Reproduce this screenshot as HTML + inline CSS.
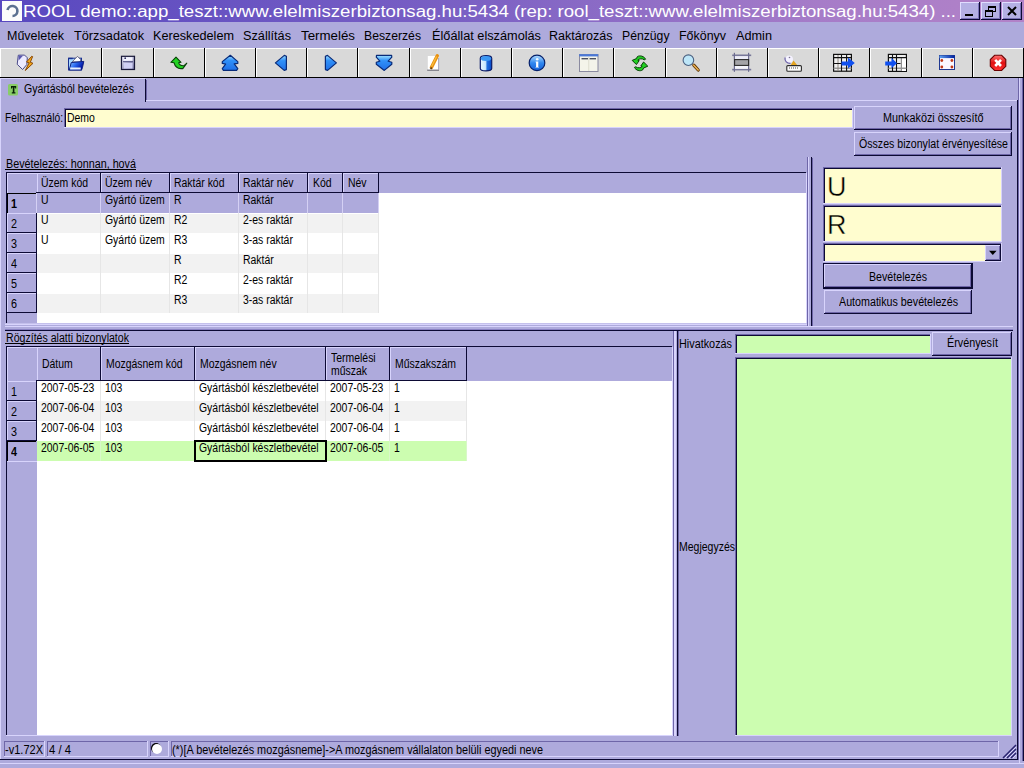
<!DOCTYPE html>
<html><head><meta charset="utf-8"><style>
html,body{margin:0;padding:0;width:1024px;height:768px;overflow:hidden;background:#aeaadc}
body>div,body>svg{position:absolute}
.t{position:absolute;white-space:nowrap;font-family:"Liberation Sans",sans-serif;line-height:1;transform-origin:0 0}
</style></head><body>
<div style="left:0px;top:0px;width:1024px;height:768px;background:#aeaadc;"></div>
<div style="left:0;top:0;width:1024px;height:22px;background:linear-gradient(90deg,#5848c0 0%,#7a60c4 45%,#a67cc8 80%,#b282c8 100%)"></div>
<div style="left:2px;top:1px;width:20px;height:20px;background:#fbfbfb;"></div>
<svg style="position:absolute;left:2px;top:1px" width="20" height="20" viewBox="0 0 20 20"><path d="M5.5 9 A5 5 0 1 1 10.5 15" fill="none" stroke="#5b7090" stroke-width="2.6"/></svg>
<div class="t" style="left:23px;top:4px;font-size:16px;color:#fff;transform:scaleX(1.1640);">ROOL demo::app_teszt::www.elelmiszerbiztonsag.hu:5434 (rep: rool_teszt::www.elelmiszerbiztonsag.hu:5434) ...</div>
<div style="left:960px;top:2px;width:20px;height:18px;background:#b4b0e4;"></div>
<div style="left:960px;top:2px;width:20px;height:1px;background:#e0dcff;"></div>
<div style="left:960px;top:2px;width:1px;height:18px;background:#e0dcff;"></div>
<div style="left:960px;top:19px;width:20px;height:1px;background:#0c0a34;"></div>
<div style="left:979px;top:2px;width:1px;height:18px;background:#0c0a34;"></div>
<div style="left:961px;top:18px;width:18px;height:1px;background:#7a72b8;"></div>
<div style="left:978px;top:3px;width:1px;height:16px;background:#7a72b8;"></div>
<div style="left:981px;top:2px;width:20px;height:18px;background:#b4b0e4;"></div>
<div style="left:981px;top:2px;width:20px;height:1px;background:#e0dcff;"></div>
<div style="left:981px;top:2px;width:1px;height:18px;background:#e0dcff;"></div>
<div style="left:981px;top:19px;width:20px;height:1px;background:#0c0a34;"></div>
<div style="left:1000px;top:2px;width:1px;height:18px;background:#0c0a34;"></div>
<div style="left:982px;top:18px;width:18px;height:1px;background:#7a72b8;"></div>
<div style="left:999px;top:3px;width:1px;height:16px;background:#7a72b8;"></div>
<div style="left:1002px;top:2px;width:20px;height:18px;background:#b4b0e4;"></div>
<div style="left:1002px;top:2px;width:20px;height:1px;background:#e0dcff;"></div>
<div style="left:1002px;top:2px;width:1px;height:18px;background:#e0dcff;"></div>
<div style="left:1002px;top:19px;width:20px;height:1px;background:#0c0a34;"></div>
<div style="left:1021px;top:2px;width:1px;height:18px;background:#0c0a34;"></div>
<div style="left:1003px;top:18px;width:18px;height:1px;background:#7a72b8;"></div>
<div style="left:1020px;top:3px;width:1px;height:16px;background:#7a72b8;"></div>
<div style="left:965px;top:14px;width:8px;height:2px;background:#000;"></div>
<svg style="position:absolute;left:981px;top:2px" width="20" height="18"><rect x="7.5" y="4.5" width="7" height="5" fill="none" stroke="#000"/><rect x="7" y="4" width="8" height="2" fill="#000"/><rect x="4.5" y="8.5" width="7" height="6" fill="#b4b0e4" stroke="#000"/><rect x="4" y="8" width="8" height="2" fill="#000"/></svg>
<svg style="position:absolute;left:1002px;top:2px" width="20" height="18"><path d="M6 5 L14 13 M14 5 L6 13" stroke="#000" stroke-width="2"/></svg>
<div class="t" style="left:7px;top:30px;font-size:12px;color:#000;transform:scaleX(1.0420);">Műveletek</div>
<div class="t" style="left:74px;top:30px;font-size:12px;color:#000;transform:scaleX(1.0601);">Törzsadatok</div>
<div class="t" style="left:153px;top:30px;font-size:12px;color:#000;transform:scaleX(1.0558);">Kereskedelem</div>
<div class="t" style="left:243px;top:30px;font-size:12px;color:#000;transform:scaleX(1.0582);">Szállítás</div>
<div class="t" style="left:301px;top:30px;font-size:12px;color:#000;transform:scaleX(1.1091);">Termelés</div>
<div class="t" style="left:364px;top:30px;font-size:12px;color:#000;transform:scaleX(1.0173);">Beszerzés</div>
<div class="t" style="left:432px;top:30px;font-size:12px;color:#000;transform:scaleX(1.0611);">Élőállat elszámolás</div>
<div class="t" style="left:549px;top:30px;font-size:12px;color:#000;transform:scaleX(1.0461);">Raktározás</div>
<div class="t" style="left:622px;top:30px;font-size:12px;color:#000;transform:scaleX(1.0171);">Pénzügy</div>
<div class="t" style="left:679px;top:30px;font-size:12px;color:#000;transform:scaleX(1.0362);">Főkönyv</div>
<div class="t" style="left:736px;top:30px;font-size:12px;color:#000;transform:scaleX(1.0583);">Admin</div>
<div style="left:0px;top:48px;width:51px;height:30px;background:#d9d9d9;"></div>
<div style="left:0px;top:48px;width:51px;height:1px;background:#ffffff;"></div>
<div style="left:0px;top:48px;width:1px;height:30px;background:#ffffff;"></div>
<div style="left:50px;top:48px;width:1px;height:30px;background:#000000;"></div>
<div style="left:0px;top:77px;width:51px;height:1px;background:#000000;"></div>
<div style="left:51px;top:48px;width:51px;height:30px;background:#d9d9d9;"></div>
<div style="left:51px;top:48px;width:51px;height:1px;background:#ffffff;"></div>
<div style="left:51px;top:48px;width:1px;height:30px;background:#ffffff;"></div>
<div style="left:101px;top:48px;width:1px;height:30px;background:#000000;"></div>
<div style="left:51px;top:77px;width:51px;height:1px;background:#000000;"></div>
<div style="left:102px;top:48px;width:52px;height:30px;background:#d9d9d9;"></div>
<div style="left:102px;top:48px;width:52px;height:1px;background:#ffffff;"></div>
<div style="left:102px;top:48px;width:1px;height:30px;background:#ffffff;"></div>
<div style="left:153px;top:48px;width:1px;height:30px;background:#000000;"></div>
<div style="left:102px;top:77px;width:52px;height:1px;background:#000000;"></div>
<div style="left:154px;top:48px;width:51px;height:30px;background:#d9d9d9;"></div>
<div style="left:154px;top:48px;width:51px;height:1px;background:#ffffff;"></div>
<div style="left:154px;top:48px;width:1px;height:30px;background:#ffffff;"></div>
<div style="left:204px;top:48px;width:1px;height:30px;background:#000000;"></div>
<div style="left:154px;top:77px;width:51px;height:1px;background:#000000;"></div>
<div style="left:205px;top:48px;width:51px;height:30px;background:#d9d9d9;"></div>
<div style="left:205px;top:48px;width:51px;height:1px;background:#ffffff;"></div>
<div style="left:205px;top:48px;width:1px;height:30px;background:#ffffff;"></div>
<div style="left:255px;top:48px;width:1px;height:30px;background:#000000;"></div>
<div style="left:205px;top:77px;width:51px;height:1px;background:#000000;"></div>
<div style="left:256px;top:48px;width:51px;height:30px;background:#d9d9d9;"></div>
<div style="left:256px;top:48px;width:51px;height:1px;background:#ffffff;"></div>
<div style="left:256px;top:48px;width:1px;height:30px;background:#ffffff;"></div>
<div style="left:306px;top:48px;width:1px;height:30px;background:#000000;"></div>
<div style="left:256px;top:77px;width:51px;height:1px;background:#000000;"></div>
<div style="left:307px;top:48px;width:51px;height:30px;background:#d9d9d9;"></div>
<div style="left:307px;top:48px;width:51px;height:1px;background:#ffffff;"></div>
<div style="left:307px;top:48px;width:1px;height:30px;background:#ffffff;"></div>
<div style="left:357px;top:48px;width:1px;height:30px;background:#000000;"></div>
<div style="left:307px;top:77px;width:51px;height:1px;background:#000000;"></div>
<div style="left:358px;top:48px;width:52px;height:30px;background:#d9d9d9;"></div>
<div style="left:358px;top:48px;width:52px;height:1px;background:#ffffff;"></div>
<div style="left:358px;top:48px;width:1px;height:30px;background:#ffffff;"></div>
<div style="left:409px;top:48px;width:1px;height:30px;background:#000000;"></div>
<div style="left:358px;top:77px;width:52px;height:1px;background:#000000;"></div>
<div style="left:410px;top:48px;width:51px;height:30px;background:#d9d9d9;"></div>
<div style="left:410px;top:48px;width:51px;height:1px;background:#ffffff;"></div>
<div style="left:410px;top:48px;width:1px;height:30px;background:#ffffff;"></div>
<div style="left:460px;top:48px;width:1px;height:30px;background:#000000;"></div>
<div style="left:410px;top:77px;width:51px;height:1px;background:#000000;"></div>
<div style="left:461px;top:48px;width:51px;height:30px;background:#d9d9d9;"></div>
<div style="left:461px;top:48px;width:51px;height:1px;background:#ffffff;"></div>
<div style="left:461px;top:48px;width:1px;height:30px;background:#ffffff;"></div>
<div style="left:511px;top:48px;width:1px;height:30px;background:#000000;"></div>
<div style="left:461px;top:77px;width:51px;height:1px;background:#000000;"></div>
<div style="left:512px;top:48px;width:51px;height:30px;background:#d9d9d9;"></div>
<div style="left:512px;top:48px;width:51px;height:1px;background:#ffffff;"></div>
<div style="left:512px;top:48px;width:1px;height:30px;background:#ffffff;"></div>
<div style="left:562px;top:48px;width:1px;height:30px;background:#000000;"></div>
<div style="left:512px;top:77px;width:51px;height:1px;background:#000000;"></div>
<div style="left:563px;top:48px;width:51px;height:30px;background:#d9d9d9;"></div>
<div style="left:563px;top:48px;width:51px;height:1px;background:#ffffff;"></div>
<div style="left:563px;top:48px;width:1px;height:30px;background:#ffffff;"></div>
<div style="left:613px;top:48px;width:1px;height:30px;background:#000000;"></div>
<div style="left:563px;top:77px;width:51px;height:1px;background:#000000;"></div>
<div style="left:614px;top:48px;width:52px;height:30px;background:#d9d9d9;"></div>
<div style="left:614px;top:48px;width:52px;height:1px;background:#ffffff;"></div>
<div style="left:614px;top:48px;width:1px;height:30px;background:#ffffff;"></div>
<div style="left:665px;top:48px;width:1px;height:30px;background:#000000;"></div>
<div style="left:614px;top:77px;width:52px;height:1px;background:#000000;"></div>
<div style="left:666px;top:48px;width:51px;height:30px;background:#d9d9d9;"></div>
<div style="left:666px;top:48px;width:51px;height:1px;background:#ffffff;"></div>
<div style="left:666px;top:48px;width:1px;height:30px;background:#ffffff;"></div>
<div style="left:716px;top:48px;width:1px;height:30px;background:#000000;"></div>
<div style="left:666px;top:77px;width:51px;height:1px;background:#000000;"></div>
<div style="left:717px;top:48px;width:51px;height:30px;background:#d9d9d9;"></div>
<div style="left:717px;top:48px;width:51px;height:1px;background:#ffffff;"></div>
<div style="left:717px;top:48px;width:1px;height:30px;background:#ffffff;"></div>
<div style="left:767px;top:48px;width:1px;height:30px;background:#000000;"></div>
<div style="left:717px;top:77px;width:51px;height:1px;background:#000000;"></div>
<div style="left:768px;top:48px;width:51px;height:30px;background:#d9d9d9;"></div>
<div style="left:768px;top:48px;width:51px;height:1px;background:#ffffff;"></div>
<div style="left:768px;top:48px;width:1px;height:30px;background:#ffffff;"></div>
<div style="left:818px;top:48px;width:1px;height:30px;background:#000000;"></div>
<div style="left:768px;top:77px;width:51px;height:1px;background:#000000;"></div>
<div style="left:819px;top:48px;width:51px;height:30px;background:#d9d9d9;"></div>
<div style="left:819px;top:48px;width:51px;height:1px;background:#ffffff;"></div>
<div style="left:819px;top:48px;width:1px;height:30px;background:#ffffff;"></div>
<div style="left:869px;top:48px;width:1px;height:30px;background:#000000;"></div>
<div style="left:819px;top:77px;width:51px;height:1px;background:#000000;"></div>
<div style="left:870px;top:48px;width:52px;height:30px;background:#d9d9d9;"></div>
<div style="left:870px;top:48px;width:52px;height:1px;background:#ffffff;"></div>
<div style="left:870px;top:48px;width:1px;height:30px;background:#ffffff;"></div>
<div style="left:921px;top:48px;width:1px;height:30px;background:#000000;"></div>
<div style="left:870px;top:77px;width:52px;height:1px;background:#000000;"></div>
<div style="left:922px;top:48px;width:51px;height:30px;background:#d9d9d9;"></div>
<div style="left:922px;top:48px;width:51px;height:1px;background:#ffffff;"></div>
<div style="left:922px;top:48px;width:1px;height:30px;background:#ffffff;"></div>
<div style="left:972px;top:48px;width:1px;height:30px;background:#000000;"></div>
<div style="left:922px;top:77px;width:51px;height:1px;background:#000000;"></div>
<div style="left:973px;top:48px;width:51px;height:30px;background:#d9d9d9;"></div>
<div style="left:973px;top:48px;width:51px;height:1px;background:#ffffff;"></div>
<div style="left:973px;top:48px;width:1px;height:30px;background:#ffffff;"></div>
<div style="left:1023px;top:48px;width:1px;height:30px;background:#000000;"></div>
<div style="left:973px;top:77px;width:51px;height:1px;background:#000000;"></div>
<div style="left:0px;top:78px;width:1024px;height:690px;background:#aeaadc;"></div>
<div style="left:0px;top:78px;width:145px;height:1px;background:#d8d4fc;"></div>
<div style="left:145px;top:79px;width:1px;height:23px;background:#0c0a34;"></div>
<div style="left:146px;top:80px;width:1px;height:21px;background:#6e66a8;"></div>
<div style="left:146px;top:100px;width:872px;height:1px;background:#d8d4fc;"></div>
<div style="left:0px;top:78px;width:1px;height:681px;background:#d8d4fc;"></div>
<div style="left:1017px;top:100px;width:1px;height:660px;background:#0c0a34;"></div>
<div style="left:1018px;top:78px;width:1px;height:682px;background:#6e66a8;"></div>
<div style="left:1019px;top:78px;width:1px;height:685px;background:#d8d4fc;"></div>
<div style="left:1022px;top:78px;width:1px;height:683px;background:#6e66a8;"></div>
<div style="left:1023px;top:78px;width:1px;height:683px;background:#0c0a34;"></div>
<div style="left:0px;top:759px;width:1018px;height:1px;background:#0c0a34;"></div>
<div style="left:0px;top:763px;width:1024px;height:1px;background:#d8d4fc;"></div>
<svg style="position:absolute;left:0;top:78px" width="24" height="22"><rect x="8" y="6" width="10" height="11.6" rx="1.5" fill="#88cc68"/><path d="M11 8 H16.2 V10.6 H15.2 V9.4 H14.4 V14.2 H15.4 V15.4 H11.8 V14.2 H12.8 V9.4 H12 V10.6 H11 Z" fill="#082008"/></svg>
<div class="t" style="left:24px;top:83px;font-size:12px;color:#000;transform:scaleX(0.8771);">Gyártásból bevételezés</div>
<div class="t" style="left:5px;top:112px;font-size:12px;color:#000;transform:scaleX(0.8524);">Felhasználó:</div>
<div style="left:64px;top:108px;width:789px;height:20px;background:#fffdcf;"></div>
<div style="left:64px;top:108px;width:789px;height:1px;background:#6e66a8;"></div>
<div style="left:64px;top:108px;width:1px;height:20px;background:#6e66a8;"></div>
<div style="left:65px;top:109px;width:787px;height:1px;background:#0c0a34;"></div>
<div style="left:65px;top:109px;width:1px;height:18px;background:#0c0a34;"></div>
<div style="left:64px;top:127px;width:789px;height:1px;background:#d8d4fc;"></div>
<div style="left:852px;top:108px;width:1px;height:20px;background:#d8d4fc;"></div>
<div class="t" style="left:67px;top:112px;font-size:12px;color:#000;transform:scaleX(0.8700);">Demo</div>
<div style="left:854px;top:106px;width:158px;height:24px;background:#aeaadc;"></div>
<div style="left:854px;top:106px;width:158px;height:1px;background:#d8d4fc;"></div>
<div style="left:854px;top:106px;width:1px;height:24px;background:#d8d4fc;"></div>
<div style="left:854px;top:129px;width:158px;height:1px;background:#0c0a34;"></div>
<div style="left:1011px;top:106px;width:1px;height:24px;background:#0c0a34;"></div>
<div style="left:855px;top:128px;width:156px;height:1px;background:#6e66a8;"></div>
<div style="left:1010px;top:107px;width:1px;height:22px;background:#6e66a8;"></div>
<div class="t" style="left:883px;top:112px;font-size:12px;color:#000;transform:scaleX(0.9022);">Munkaközi összesítő</div>
<div style="left:854px;top:132px;width:158px;height:24px;background:#aeaadc;"></div>
<div style="left:854px;top:132px;width:158px;height:1px;background:#d8d4fc;"></div>
<div style="left:854px;top:132px;width:1px;height:24px;background:#d8d4fc;"></div>
<div style="left:854px;top:155px;width:158px;height:1px;background:#0c0a34;"></div>
<div style="left:1011px;top:132px;width:1px;height:24px;background:#0c0a34;"></div>
<div style="left:855px;top:154px;width:156px;height:1px;background:#6e66a8;"></div>
<div style="left:1010px;top:133px;width:1px;height:22px;background:#6e66a8;"></div>
<div class="t" style="left:859px;top:138px;font-size:12px;color:#000;transform:scaleX(0.8830);">Összes bizonylat érvényesítése</div>
<div class="t" style="left:6px;top:158px;font-size:12px;color:#000;transform:scaleX(0.8979);">Bevételezés: honnan, hová</div>
<div style="left:5px;top:169px;width:131px;height:1px;background:#000;"></div>
<div style="left:807px;top:157px;width:1px;height:169px;background:#6e66a8;"></div>
<div style="left:808px;top:157px;width:1px;height:169px;background:#d8d4fc;"></div>
<div style="left:811px;top:157px;width:1px;height:169px;background:#0c0a34;"></div>
<div style="left:812px;top:158px;width:1px;height:168px;background:#6e66a8;"></div>
<div style="left:6px;top:172px;width:800px;height:1px;background:#0c0a34;"></div>
<div style="left:6px;top:172px;width:1px;height:151px;background:#0c0a34;"></div>
<div style="left:806px;top:173px;width:1px;height:150px;background:#d8d4fc;"></div>
<div style="left:6px;top:323px;width:801px;height:1px;background:#d8d4fc;"></div>
<div style="left:7px;top:173px;width:799px;height:20px;background:#aeaadc;"></div>
<div style="left:37px;top:193px;width:769px;height:130px;background:#ffffff;"></div>
<div style="left:7px;top:193px;width:30px;height:130px;background:#aeaadc;"></div>
<div style="left:7px;top:173px;width:30px;height:1px;background:#d8d4fc;"></div>
<div style="left:7px;top:173px;width:1px;height:20px;background:#d8d4fc;"></div>
<div style="left:37px;top:173px;width:64px;height:1px;background:#d8d4fc;"></div>
<div style="left:37px;top:173px;width:1px;height:20px;background:#d8d4fc;"></div>
<div style="left:100px;top:173px;width:1px;height:20px;background:#0c0a34;"></div>
<div style="left:101px;top:173px;width:69px;height:1px;background:#d8d4fc;"></div>
<div style="left:101px;top:173px;width:1px;height:20px;background:#d8d4fc;"></div>
<div style="left:169px;top:173px;width:1px;height:20px;background:#0c0a34;"></div>
<div style="left:170px;top:173px;width:69px;height:1px;background:#d8d4fc;"></div>
<div style="left:170px;top:173px;width:1px;height:20px;background:#d8d4fc;"></div>
<div style="left:238px;top:173px;width:1px;height:20px;background:#0c0a34;"></div>
<div style="left:239px;top:173px;width:69px;height:1px;background:#d8d4fc;"></div>
<div style="left:239px;top:173px;width:1px;height:20px;background:#d8d4fc;"></div>
<div style="left:307px;top:173px;width:1px;height:20px;background:#0c0a34;"></div>
<div style="left:308px;top:173px;width:35px;height:1px;background:#d8d4fc;"></div>
<div style="left:308px;top:173px;width:1px;height:20px;background:#d8d4fc;"></div>
<div style="left:342px;top:173px;width:1px;height:20px;background:#0c0a34;"></div>
<div style="left:343px;top:173px;width:36px;height:1px;background:#d8d4fc;"></div>
<div style="left:343px;top:173px;width:1px;height:20px;background:#d8d4fc;"></div>
<div style="left:378px;top:173px;width:1px;height:20px;background:#0c0a34;"></div>
<div style="left:36px;top:192px;width:343px;height:1px;background:#0c0a34;"></div>
<div class="t" style="left:41px;top:177px;font-size:12px;color:#000;transform:scaleX(0.8700);">Üzem kód</div>
<div class="t" style="left:105px;top:177px;font-size:12px;color:#000;transform:scaleX(0.8700);">Üzem név</div>
<div class="t" style="left:174px;top:177px;font-size:12px;color:#000;transform:scaleX(0.8700);">Raktár kód</div>
<div class="t" style="left:243px;top:177px;font-size:12px;color:#000;transform:scaleX(0.8700);">Raktár név</div>
<div class="t" style="left:313px;top:177px;font-size:12px;color:#000;transform:scaleX(0.8700);">Kód</div>
<div class="t" style="left:348px;top:177px;font-size:12px;color:#000;transform:scaleX(0.8700);">Név</div>
<div style="left:37px;top:193px;width:342px;height:20px;background:#aeaadc;"></div>
<div style="left:100px;top:193px;width:1px;height:20px;background:#d4d0f4;"></div>
<div style="left:169px;top:193px;width:1px;height:20px;background:#d4d0f4;"></div>
<div style="left:238px;top:193px;width:1px;height:20px;background:#d4d0f4;"></div>
<div style="left:307px;top:193px;width:1px;height:20px;background:#d4d0f4;"></div>
<div style="left:342px;top:193px;width:1px;height:20px;background:#d4d0f4;"></div>
<div style="left:378px;top:193px;width:1px;height:20px;background:#d4d0f4;"></div>
<div style="left:7px;top:193px;width:29px;height:1px;background:#000;"></div>
<div style="left:7px;top:193px;width:1px;height:20px;background:#000;"></div>
<div style="left:36px;top:193px;width:1px;height:20px;background:#d4d0f4;"></div>
<div class="t" style="left:11px;top:198px;font-size:12px;color:#000;font-weight:bold;transform:scaleX(0.9000);">1</div>
<div class="t" style="left:41px;top:194px;font-size:12px;color:#000;transform:scaleX(0.8700);">U</div>
<div class="t" style="left:105px;top:194px;font-size:12px;color:#000;transform:scaleX(0.8700);">Gyártó üzem</div>
<div class="t" style="left:174px;top:194px;font-size:12px;color:#000;transform:scaleX(0.8700);">R</div>
<div class="t" style="left:243px;top:194px;font-size:12px;color:#000;transform:scaleX(0.8700);">Raktár</div>
<div style="left:37px;top:213px;width:342px;height:20px;background:#f2f2f2;"></div>
<div style="left:37px;top:213px;width:342px;height:1px;background:#ffffff;"></div>
<div style="left:100px;top:213px;width:1px;height:20px;background:#e6e6e6;"></div>
<div style="left:169px;top:213px;width:1px;height:20px;background:#e6e6e6;"></div>
<div style="left:238px;top:213px;width:1px;height:20px;background:#e6e6e6;"></div>
<div style="left:307px;top:213px;width:1px;height:20px;background:#e6e6e6;"></div>
<div style="left:342px;top:213px;width:1px;height:20px;background:#e6e6e6;"></div>
<div style="left:378px;top:213px;width:1px;height:20px;background:#e6e6e6;"></div>
<div style="left:7px;top:213px;width:30px;height:1px;background:#d8d4fc;"></div>
<div style="left:7px;top:213px;width:1px;height:20px;background:#d8d4fc;"></div>
<div style="left:36px;top:213px;width:1px;height:20px;background:#0c0a34;"></div>
<div style="left:7px;top:232px;width:30px;height:1px;background:#0c0a34;"></div>
<div class="t" style="left:11px;top:218px;font-size:12px;color:#000;transform:scaleX(0.9000);">2</div>
<div class="t" style="left:41px;top:214px;font-size:12px;color:#000;transform:scaleX(0.8700);">U</div>
<div class="t" style="left:105px;top:214px;font-size:12px;color:#000;transform:scaleX(0.8700);">Gyártó üzem</div>
<div class="t" style="left:174px;top:214px;font-size:12px;color:#000;transform:scaleX(0.8700);">R2</div>
<div class="t" style="left:243px;top:214px;font-size:12px;color:#000;transform:scaleX(0.8700);">2-es raktár</div>
<div style="left:37px;top:233px;width:342px;height:20px;background:#ffffff;"></div>
<div style="left:37px;top:233px;width:342px;height:1px;background:#ffffff;"></div>
<div style="left:100px;top:233px;width:1px;height:20px;background:#e6e6e6;"></div>
<div style="left:169px;top:233px;width:1px;height:20px;background:#e6e6e6;"></div>
<div style="left:238px;top:233px;width:1px;height:20px;background:#e6e6e6;"></div>
<div style="left:307px;top:233px;width:1px;height:20px;background:#e6e6e6;"></div>
<div style="left:342px;top:233px;width:1px;height:20px;background:#e6e6e6;"></div>
<div style="left:378px;top:233px;width:1px;height:20px;background:#e6e6e6;"></div>
<div style="left:7px;top:233px;width:30px;height:1px;background:#d8d4fc;"></div>
<div style="left:7px;top:233px;width:1px;height:20px;background:#d8d4fc;"></div>
<div style="left:36px;top:233px;width:1px;height:20px;background:#0c0a34;"></div>
<div style="left:7px;top:252px;width:30px;height:1px;background:#0c0a34;"></div>
<div class="t" style="left:11px;top:238px;font-size:12px;color:#000;transform:scaleX(0.9000);">3</div>
<div class="t" style="left:41px;top:234px;font-size:12px;color:#000;transform:scaleX(0.8700);">U</div>
<div class="t" style="left:105px;top:234px;font-size:12px;color:#000;transform:scaleX(0.8700);">Gyártó üzem</div>
<div class="t" style="left:174px;top:234px;font-size:12px;color:#000;transform:scaleX(0.8700);">R3</div>
<div class="t" style="left:243px;top:234px;font-size:12px;color:#000;transform:scaleX(0.8700);">3-as raktár</div>
<div style="left:37px;top:253px;width:342px;height:20px;background:#f2f2f2;"></div>
<div style="left:37px;top:253px;width:342px;height:1px;background:#ffffff;"></div>
<div style="left:100px;top:253px;width:1px;height:20px;background:#e6e6e6;"></div>
<div style="left:169px;top:253px;width:1px;height:20px;background:#e6e6e6;"></div>
<div style="left:238px;top:253px;width:1px;height:20px;background:#e6e6e6;"></div>
<div style="left:307px;top:253px;width:1px;height:20px;background:#e6e6e6;"></div>
<div style="left:342px;top:253px;width:1px;height:20px;background:#e6e6e6;"></div>
<div style="left:378px;top:253px;width:1px;height:20px;background:#e6e6e6;"></div>
<div style="left:7px;top:253px;width:30px;height:1px;background:#d8d4fc;"></div>
<div style="left:7px;top:253px;width:1px;height:20px;background:#d8d4fc;"></div>
<div style="left:36px;top:253px;width:1px;height:20px;background:#0c0a34;"></div>
<div style="left:7px;top:272px;width:30px;height:1px;background:#0c0a34;"></div>
<div class="t" style="left:11px;top:258px;font-size:12px;color:#000;transform:scaleX(0.9000);">4</div>
<div class="t" style="left:174px;top:254px;font-size:12px;color:#000;transform:scaleX(0.8700);">R</div>
<div class="t" style="left:243px;top:254px;font-size:12px;color:#000;transform:scaleX(0.8700);">Raktár</div>
<div style="left:37px;top:273px;width:342px;height:20px;background:#ffffff;"></div>
<div style="left:37px;top:273px;width:342px;height:1px;background:#ffffff;"></div>
<div style="left:100px;top:273px;width:1px;height:20px;background:#e6e6e6;"></div>
<div style="left:169px;top:273px;width:1px;height:20px;background:#e6e6e6;"></div>
<div style="left:238px;top:273px;width:1px;height:20px;background:#e6e6e6;"></div>
<div style="left:307px;top:273px;width:1px;height:20px;background:#e6e6e6;"></div>
<div style="left:342px;top:273px;width:1px;height:20px;background:#e6e6e6;"></div>
<div style="left:378px;top:273px;width:1px;height:20px;background:#e6e6e6;"></div>
<div style="left:7px;top:273px;width:30px;height:1px;background:#d8d4fc;"></div>
<div style="left:7px;top:273px;width:1px;height:20px;background:#d8d4fc;"></div>
<div style="left:36px;top:273px;width:1px;height:20px;background:#0c0a34;"></div>
<div style="left:7px;top:292px;width:30px;height:1px;background:#0c0a34;"></div>
<div class="t" style="left:11px;top:278px;font-size:12px;color:#000;transform:scaleX(0.9000);">5</div>
<div class="t" style="left:174px;top:274px;font-size:12px;color:#000;transform:scaleX(0.8700);">R2</div>
<div class="t" style="left:243px;top:274px;font-size:12px;color:#000;transform:scaleX(0.8700);">2-es raktár</div>
<div style="left:37px;top:293px;width:342px;height:20px;background:#f2f2f2;"></div>
<div style="left:37px;top:293px;width:342px;height:1px;background:#ffffff;"></div>
<div style="left:100px;top:293px;width:1px;height:20px;background:#e6e6e6;"></div>
<div style="left:169px;top:293px;width:1px;height:20px;background:#e6e6e6;"></div>
<div style="left:238px;top:293px;width:1px;height:20px;background:#e6e6e6;"></div>
<div style="left:307px;top:293px;width:1px;height:20px;background:#e6e6e6;"></div>
<div style="left:342px;top:293px;width:1px;height:20px;background:#e6e6e6;"></div>
<div style="left:378px;top:293px;width:1px;height:20px;background:#e6e6e6;"></div>
<div style="left:7px;top:293px;width:30px;height:1px;background:#d8d4fc;"></div>
<div style="left:7px;top:293px;width:1px;height:20px;background:#d8d4fc;"></div>
<div style="left:36px;top:293px;width:1px;height:20px;background:#0c0a34;"></div>
<div style="left:7px;top:312px;width:30px;height:1px;background:#0c0a34;"></div>
<div class="t" style="left:11px;top:298px;font-size:12px;color:#000;transform:scaleX(0.9000);">6</div>
<div class="t" style="left:174px;top:294px;font-size:12px;color:#000;transform:scaleX(0.8700);">R3</div>
<div class="t" style="left:243px;top:294px;font-size:12px;color:#000;transform:scaleX(0.8700);">3-as raktár</div>
<div style="left:5px;top:323px;width:802px;height:1px;background:#c4c0ec;"></div>
<div style="left:5px;top:324px;width:802px;height:1px;background:#d8d4fc;"></div>
<div style="left:5px;top:326px;width:1008px;height:1px;background:#d8d4fc;"></div>
<div style="left:5px;top:329px;width:1008px;height:1px;background:#8a82c4;"></div>
<div style="left:5px;top:330px;width:1008px;height:1px;background:#0c0a34;"></div>
<div style="left:823px;top:167px;width:179px;height:37px;background:#fffdcf;"></div>
<div style="left:823px;top:167px;width:179px;height:1px;background:#6e66a8;"></div>
<div style="left:823px;top:167px;width:1px;height:37px;background:#6e66a8;"></div>
<div style="left:824px;top:168px;width:177px;height:1px;background:#0c0a34;"></div>
<div style="left:824px;top:168px;width:1px;height:35px;background:#0c0a34;"></div>
<div style="left:823px;top:203px;width:179px;height:1px;background:#d8d4fc;"></div>
<div style="left:1001px;top:167px;width:1px;height:37px;background:#d8d4fc;"></div>
<div class="t" style="left:827px;top:174px;font-size:27px;color:#000;-webkit-text-stroke:0.45px #fffdcf;">U</div>
<div style="left:823px;top:205px;width:179px;height:37px;background:#fffdcf;"></div>
<div style="left:823px;top:205px;width:179px;height:1px;background:#6e66a8;"></div>
<div style="left:823px;top:205px;width:1px;height:37px;background:#6e66a8;"></div>
<div style="left:824px;top:206px;width:177px;height:1px;background:#0c0a34;"></div>
<div style="left:824px;top:206px;width:1px;height:35px;background:#0c0a34;"></div>
<div style="left:823px;top:241px;width:179px;height:1px;background:#d8d4fc;"></div>
<div style="left:1001px;top:205px;width:1px;height:37px;background:#d8d4fc;"></div>
<div class="t" style="left:827px;top:212px;font-size:27px;color:#000;-webkit-text-stroke:0.45px #fffdcf;">R</div>
<div style="left:823px;top:243px;width:179px;height:19px;background:#fffdcf;"></div>
<div style="left:823px;top:243px;width:179px;height:1px;background:#6e66a8;"></div>
<div style="left:823px;top:243px;width:1px;height:19px;background:#6e66a8;"></div>
<div style="left:824px;top:244px;width:177px;height:1px;background:#0c0a34;"></div>
<div style="left:824px;top:244px;width:1px;height:17px;background:#0c0a34;"></div>
<div style="left:823px;top:261px;width:179px;height:1px;background:#d8d4fc;"></div>
<div style="left:1001px;top:243px;width:1px;height:19px;background:#d8d4fc;"></div>
<div style="left:985px;top:245px;width:16px;height:16px;background:#aeaadc;"></div>
<div style="left:985px;top:245px;width:16px;height:1px;background:#d8d4fc;"></div>
<div style="left:985px;top:245px;width:1px;height:16px;background:#d8d4fc;"></div>
<div style="left:985px;top:260px;width:16px;height:1px;background:#0c0a34;"></div>
<div style="left:1000px;top:245px;width:1px;height:16px;background:#0c0a34;"></div>
<div style="left:986px;top:259px;width:14px;height:1px;background:#6e66a8;"></div>
<div style="left:999px;top:246px;width:1px;height:14px;background:#6e66a8;"></div>
<svg style="position:absolute;left:985px;top:245px" width="16" height="16"><path d="M4 5.8 L11.6 5.8 L7.8 10 Z" fill="#000"/></svg>
<div style="left:823px;top:263px;width:150px;height:26px;background:#0c0a34;"></div>
<div style="left:824px;top:264px;width:148px;height:24px;background:#aeaadc;"></div>
<div style="left:824px;top:264px;width:148px;height:1px;background:#d8d4fc;"></div>
<div style="left:824px;top:264px;width:1px;height:24px;background:#d8d4fc;"></div>
<div style="left:824px;top:287px;width:148px;height:1px;background:#0c0a34;"></div>
<div style="left:971px;top:264px;width:1px;height:24px;background:#0c0a34;"></div>
<div style="left:825px;top:286px;width:146px;height:1px;background:#6e66a8;"></div>
<div style="left:970px;top:265px;width:1px;height:22px;background:#6e66a8;"></div>
<div class="t" style="left:869px;top:271px;font-size:12px;color:#000;transform:scaleX(0.8872);">Bevételezés</div>
<div style="left:824px;top:290px;width:148px;height:24px;background:#aeaadc;"></div>
<div style="left:824px;top:290px;width:148px;height:1px;background:#d8d4fc;"></div>
<div style="left:824px;top:290px;width:1px;height:24px;background:#d8d4fc;"></div>
<div style="left:824px;top:313px;width:148px;height:1px;background:#0c0a34;"></div>
<div style="left:971px;top:290px;width:1px;height:24px;background:#0c0a34;"></div>
<div style="left:825px;top:312px;width:146px;height:1px;background:#6e66a8;"></div>
<div style="left:970px;top:291px;width:1px;height:22px;background:#6e66a8;"></div>
<div class="t" style="left:839px;top:296px;font-size:12px;color:#000;transform:scaleX(0.8920);">Automatikus bevételezés</div>
<div class="t" style="left:6px;top:332px;font-size:12px;color:#000;transform:scaleX(0.8823);">Rögzítés alatti bizonylatok</div>
<div style="left:5px;top:343px;width:124px;height:1px;background:#000;"></div>
<div style="left:6px;top:346px;width:666px;height:1px;background:#0c0a34;"></div>
<div style="left:6px;top:346px;width:1px;height:389px;background:#0c0a34;"></div>
<div style="left:672px;top:347px;width:1px;height:388px;background:#d8d4fc;"></div>
<div style="left:6px;top:735px;width:667px;height:1px;background:#d8d4fc;"></div>
<div style="left:7px;top:347px;width:665px;height:34px;background:#aeaadc;"></div>
<div style="left:37px;top:381px;width:635px;height:354px;background:#ffffff;"></div>
<div style="left:7px;top:381px;width:30px;height:354px;background:#aeaadc;"></div>
<div style="left:7px;top:347px;width:30px;height:1px;background:#d8d4fc;"></div>
<div style="left:7px;top:347px;width:1px;height:34px;background:#d8d4fc;"></div>
<div style="left:37px;top:347px;width:64px;height:1px;background:#d8d4fc;"></div>
<div style="left:37px;top:347px;width:1px;height:34px;background:#d8d4fc;"></div>
<div style="left:100px;top:347px;width:1px;height:34px;background:#0c0a34;"></div>
<div style="left:101px;top:347px;width:94px;height:1px;background:#d8d4fc;"></div>
<div style="left:101px;top:347px;width:1px;height:34px;background:#d8d4fc;"></div>
<div style="left:194px;top:347px;width:1px;height:34px;background:#0c0a34;"></div>
<div style="left:195px;top:347px;width:131px;height:1px;background:#d8d4fc;"></div>
<div style="left:195px;top:347px;width:1px;height:34px;background:#d8d4fc;"></div>
<div style="left:325px;top:347px;width:1px;height:34px;background:#0c0a34;"></div>
<div style="left:326px;top:347px;width:64px;height:1px;background:#d8d4fc;"></div>
<div style="left:326px;top:347px;width:1px;height:34px;background:#d8d4fc;"></div>
<div style="left:389px;top:347px;width:1px;height:34px;background:#0c0a34;"></div>
<div style="left:390px;top:347px;width:77px;height:1px;background:#d8d4fc;"></div>
<div style="left:390px;top:347px;width:1px;height:34px;background:#d8d4fc;"></div>
<div style="left:466px;top:347px;width:1px;height:34px;background:#0c0a34;"></div>
<div style="left:36px;top:380px;width:431px;height:1px;background:#0c0a34;"></div>
<div class="t" style="left:42px;top:358px;font-size:12px;color:#000;transform:scaleX(0.8700);">Dátum</div>
<div class="t" style="left:106px;top:358px;font-size:12px;color:#000;transform:scaleX(0.8700);">Mozgásnem kód</div>
<div class="t" style="left:200px;top:358px;font-size:12px;color:#000;transform:scaleX(0.8700);">Mozgásnem név</div>
<div class="t" style="left:395px;top:358px;font-size:12px;color:#000;transform:scaleX(0.8700);">Műszakszám</div>
<div class="t" style="left:331px;top:352px;font-size:12px;color:#000;transform:scaleX(0.8700);">Termelési</div>
<div class="t" style="left:331px;top:365px;font-size:12px;color:#000;transform:scaleX(0.8700);">műszak</div>
<div style="left:37px;top:381px;width:430px;height:20px;background:#ffffff;"></div>
<div style="left:100px;top:381px;width:1px;height:20px;background:#e6e6e6;"></div>
<div style="left:194px;top:381px;width:1px;height:20px;background:#e6e6e6;"></div>
<div style="left:325px;top:381px;width:1px;height:20px;background:#e6e6e6;"></div>
<div style="left:389px;top:381px;width:1px;height:20px;background:#e6e6e6;"></div>
<div style="left:466px;top:381px;width:1px;height:20px;background:#e6e6e6;"></div>
<div style="left:7px;top:381px;width:30px;height:1px;background:#d8d4fc;"></div>
<div style="left:7px;top:381px;width:1px;height:20px;background:#d8d4fc;"></div>
<div style="left:36px;top:381px;width:1px;height:20px;background:#0c0a34;"></div>
<div style="left:7px;top:400px;width:30px;height:1px;background:#0c0a34;"></div>
<div class="t" style="left:11px;top:386px;font-size:12px;color:#000;transform:scaleX(0.9000);">1</div>
<div class="t" style="left:41px;top:382px;font-size:12px;color:#000;transform:scaleX(0.8700);">2007-05-23</div>
<div class="t" style="left:105px;top:382px;font-size:12px;color:#000;transform:scaleX(0.8700);">103</div>
<div class="t" style="left:199px;top:382px;font-size:12px;color:#000;transform:scaleX(0.8700);">Gyártásból készletbevétel</div>
<div class="t" style="left:330px;top:382px;font-size:12px;color:#000;transform:scaleX(0.8700);">2007-05-23</div>
<div class="t" style="left:394px;top:382px;font-size:12px;color:#000;transform:scaleX(0.8700);">1</div>
<div style="left:37px;top:401px;width:430px;height:20px;background:#f2f2f2;"></div>
<div style="left:100px;top:401px;width:1px;height:20px;background:#e6e6e6;"></div>
<div style="left:194px;top:401px;width:1px;height:20px;background:#e6e6e6;"></div>
<div style="left:325px;top:401px;width:1px;height:20px;background:#e6e6e6;"></div>
<div style="left:389px;top:401px;width:1px;height:20px;background:#e6e6e6;"></div>
<div style="left:466px;top:401px;width:1px;height:20px;background:#e6e6e6;"></div>
<div style="left:7px;top:401px;width:30px;height:1px;background:#d8d4fc;"></div>
<div style="left:7px;top:401px;width:1px;height:20px;background:#d8d4fc;"></div>
<div style="left:36px;top:401px;width:1px;height:20px;background:#0c0a34;"></div>
<div style="left:7px;top:420px;width:30px;height:1px;background:#0c0a34;"></div>
<div class="t" style="left:11px;top:406px;font-size:12px;color:#000;transform:scaleX(0.9000);">2</div>
<div class="t" style="left:41px;top:402px;font-size:12px;color:#000;transform:scaleX(0.8700);">2007-06-04</div>
<div class="t" style="left:105px;top:402px;font-size:12px;color:#000;transform:scaleX(0.8700);">103</div>
<div class="t" style="left:199px;top:402px;font-size:12px;color:#000;transform:scaleX(0.8700);">Gyártásból készletbevétel</div>
<div class="t" style="left:330px;top:402px;font-size:12px;color:#000;transform:scaleX(0.8700);">2007-06-04</div>
<div class="t" style="left:394px;top:402px;font-size:12px;color:#000;transform:scaleX(0.8700);">1</div>
<div style="left:37px;top:421px;width:430px;height:20px;background:#ffffff;"></div>
<div style="left:100px;top:421px;width:1px;height:20px;background:#e6e6e6;"></div>
<div style="left:194px;top:421px;width:1px;height:20px;background:#e6e6e6;"></div>
<div style="left:325px;top:421px;width:1px;height:20px;background:#e6e6e6;"></div>
<div style="left:389px;top:421px;width:1px;height:20px;background:#e6e6e6;"></div>
<div style="left:466px;top:421px;width:1px;height:20px;background:#e6e6e6;"></div>
<div style="left:7px;top:421px;width:30px;height:1px;background:#d8d4fc;"></div>
<div style="left:7px;top:421px;width:1px;height:20px;background:#d8d4fc;"></div>
<div style="left:36px;top:421px;width:1px;height:20px;background:#0c0a34;"></div>
<div style="left:7px;top:440px;width:30px;height:1px;background:#0c0a34;"></div>
<div class="t" style="left:11px;top:426px;font-size:12px;color:#000;transform:scaleX(0.9000);">3</div>
<div class="t" style="left:41px;top:422px;font-size:12px;color:#000;transform:scaleX(0.8700);">2007-06-04</div>
<div class="t" style="left:105px;top:422px;font-size:12px;color:#000;transform:scaleX(0.8700);">103</div>
<div class="t" style="left:199px;top:422px;font-size:12px;color:#000;transform:scaleX(0.8700);">Gyártásból készletbevétel</div>
<div class="t" style="left:330px;top:422px;font-size:12px;color:#000;transform:scaleX(0.8700);">2007-06-04</div>
<div class="t" style="left:394px;top:422px;font-size:12px;color:#000;transform:scaleX(0.8700);">1</div>
<div style="left:37px;top:441px;width:430px;height:20px;background:#ccfdb0;"></div>
<div style="left:100px;top:441px;width:1px;height:20px;background:#d8f8c8;"></div>
<div style="left:194px;top:441px;width:1px;height:20px;background:#d8f8c8;"></div>
<div style="left:325px;top:441px;width:1px;height:20px;background:#d8f8c8;"></div>
<div style="left:389px;top:441px;width:1px;height:20px;background:#d8f8c8;"></div>
<div style="left:466px;top:441px;width:1px;height:20px;background:#d8f8c8;"></div>
<div style="left:7px;top:441px;width:29px;height:1px;background:#000;"></div>
<div style="left:7px;top:441px;width:1px;height:20px;background:#000;"></div>
<div style="left:7px;top:461px;width:30px;height:1px;background:#d8d4fc;"></div>
<div class="t" style="left:11px;top:446px;font-size:12px;color:#000;font-weight:bold;transform:scaleX(0.9000);">4</div>
<div class="t" style="left:41px;top:442px;font-size:12px;color:#000;transform:scaleX(0.8700);">2007-06-05</div>
<div class="t" style="left:105px;top:442px;font-size:12px;color:#000;transform:scaleX(0.8700);">103</div>
<div class="t" style="left:199px;top:442px;font-size:12px;color:#000;transform:scaleX(0.8700);">Gyártásból készletbevétel</div>
<div class="t" style="left:330px;top:442px;font-size:12px;color:#000;transform:scaleX(0.8700);">2007-06-05</div>
<div class="t" style="left:394px;top:442px;font-size:12px;color:#000;transform:scaleX(0.8700);">1</div>
<div style="left:194px;top:440px;width:129px;height:18px;border:2px solid #000"></div>
<div style="left:673px;top:331px;width:1px;height:405px;background:#6e66a8;"></div>
<div style="left:674px;top:331px;width:1px;height:405px;background:#d8d4fc;"></div>
<div style="left:675px;top:331px;width:1px;height:405px;background:#d8d4fc;"></div>
<div style="left:677px;top:331px;width:1px;height:405px;background:#0c0a34;"></div>
<div style="left:678px;top:331px;width:1px;height:405px;background:#6e66a8;"></div>
<div class="t" style="left:679px;top:338px;font-size:12px;color:#000;transform:scaleX(0.9031);">Hivatkozás</div>
<div style="left:735px;top:334px;width:196px;height:20px;background:#ccfdb0;"></div>
<div style="left:735px;top:334px;width:196px;height:1px;background:#6e66a8;"></div>
<div style="left:735px;top:334px;width:1px;height:20px;background:#6e66a8;"></div>
<div style="left:736px;top:335px;width:194px;height:1px;background:#0c0a34;"></div>
<div style="left:736px;top:335px;width:1px;height:18px;background:#0c0a34;"></div>
<div style="left:735px;top:353px;width:196px;height:1px;background:#d8d4fc;"></div>
<div style="left:930px;top:334px;width:1px;height:20px;background:#d8d4fc;"></div>
<div style="left:932px;top:332px;width:80px;height:24px;background:#aeaadc;"></div>
<div style="left:932px;top:332px;width:80px;height:1px;background:#d8d4fc;"></div>
<div style="left:932px;top:332px;width:1px;height:24px;background:#d8d4fc;"></div>
<div style="left:932px;top:355px;width:80px;height:1px;background:#0c0a34;"></div>
<div style="left:1011px;top:332px;width:1px;height:24px;background:#0c0a34;"></div>
<div style="left:933px;top:354px;width:78px;height:1px;background:#6e66a8;"></div>
<div style="left:1010px;top:333px;width:1px;height:22px;background:#6e66a8;"></div>
<div class="t" style="left:947px;top:337px;font-size:12px;color:#000;transform:scaleX(0.8994);">Érvényesít</div>
<div style="left:735px;top:357px;width:277px;height:379px;background:#ccfdb0;"></div>
<div style="left:735px;top:357px;width:277px;height:1px;background:#6e66a8;"></div>
<div style="left:735px;top:357px;width:1px;height:379px;background:#6e66a8;"></div>
<div style="left:736px;top:358px;width:275px;height:1px;background:#0c0a34;"></div>
<div style="left:736px;top:358px;width:1px;height:377px;background:#0c0a34;"></div>
<div style="left:735px;top:735px;width:277px;height:1px;background:#d8d4fc;"></div>
<div style="left:1011px;top:357px;width:1px;height:379px;background:#d8d4fc;"></div>
<div class="t" style="left:679px;top:541px;font-size:12px;color:#000;transform:scaleX(0.8746);">Megjegyzés</div>
<div style="left:4px;top:741px;width:41px;height:1px;background:#6e66a8;"></div>
<div style="left:4px;top:741px;width:1px;height:16px;background:#6e66a8;"></div>
<div style="left:4px;top:756px;width:41px;height:1px;background:#d8d4fc;"></div>
<div style="left:44px;top:741px;width:1px;height:16px;background:#d8d4fc;"></div>
<div style="left:47px;top:741px;width:101px;height:1px;background:#6e66a8;"></div>
<div style="left:47px;top:741px;width:1px;height:16px;background:#6e66a8;"></div>
<div style="left:47px;top:756px;width:101px;height:1px;background:#d8d4fc;"></div>
<div style="left:147px;top:741px;width:1px;height:16px;background:#d8d4fc;"></div>
<div style="left:150px;top:741px;width:19px;height:1px;background:#6e66a8;"></div>
<div style="left:150px;top:741px;width:1px;height:16px;background:#6e66a8;"></div>
<div style="left:150px;top:756px;width:19px;height:1px;background:#d8d4fc;"></div>
<div style="left:168px;top:741px;width:1px;height:16px;background:#d8d4fc;"></div>
<div style="left:171px;top:741px;width:828px;height:1px;background:#6e66a8;"></div>
<div style="left:171px;top:741px;width:1px;height:16px;background:#6e66a8;"></div>
<div style="left:171px;top:756px;width:828px;height:1px;background:#d8d4fc;"></div>
<div style="left:998px;top:741px;width:1px;height:16px;background:#d8d4fc;"></div>
<div class="t" style="left:5px;top:744px;font-size:12px;color:#000;transform:scaleX(0.9188);">-v1.72X</div>
<div class="t" style="left:49px;top:744px;font-size:12px;color:#000;transform:scaleX(0.9418);">4 / 4</div>
<div style="left:152px;top:744px;width:10px;height:10px;border-radius:50%;background:#fff;box-shadow:-1px -1px 0 0 #000"></div>
<div class="t" style="left:172px;top:744px;font-size:12px;color:#000;transform:scaleX(0.9051);">(*)[A bevételezés mozgásneme]->A mozgásnem vállalaton belüli egyedi neve</div>
<svg style="position:absolute;left:1002px;top:744px" width="15" height="15"><path d="M14 1 L1 14 M14 5 L5 14 M14 9 L9 14" stroke="#2a2470" stroke-width="1.5"/><path d="M14 3 L3 14 M14 7 L7 14 M14 11 L11 14" stroke="#d8d4fc" stroke-width="1"/></svg>
<svg style="position:absolute;left:14px;top:52px;overflow:visible" width="24" height="22" viewBox="0 0 24 22"><defs></defs>
<polygon points="4.3,3.2 10.6,3.1 13.3,5.8 12.8,12.6 8.6,17.5 3.2,12.3" fill="#eceaff" stroke="#4a4a88" stroke-width="1"/>
<polygon points="4.6,3.6 9,3.8 4.6,8.5" fill="#5a58b0"/>
<polygon points="17.8,4.2 12.5,10 15.2,10.8 11.3,18.5 19,11.3 16.3,10.3 18.6,4.6" fill="#f4a818" stroke="#8a4808" stroke-width="1"/>
</svg>
<svg style="position:absolute;left:64px;top:52px;overflow:visible" width="24" height="22" viewBox="0 0 24 22"><defs><linearGradient id="fg1" x1="0" y1="0" x2="1" y2="0.4"><stop offset="0" stop-color="#90c8ff"/><stop offset="0.5" stop-color="#2a68f0"/><stop offset="1" stop-color="#0010a0"/></linearGradient></defs>
<rect x="4.5" y="6.2" width="13" height="11.8" fill="#a8d8ff" stroke="#1a3090" stroke-width="1"/>
<rect x="4.5" y="5.8" width="4.2" height="1.4" fill="#1a3090"/>
<polygon points="8.2,9.8 13.5,4.3 16.8,7.8 16.2,10" fill="#fafaff" stroke="#505070" stroke-width="0.8"/>
<polygon points="7.2,10.6 19.8,9.4 18.4,15.8 17.5,18 5.3,18" fill="url(#fg1)" stroke="#102080" stroke-width="1"/>
<rect x="6.2" y="15.5" width="10.5" height="2" fill="#e8f0ff"/>
</svg>
<svg style="position:absolute;left:116px;top:52px;overflow:visible" width="24" height="22" viewBox="0 0 24 22"><defs><linearGradient id="fl" x1="0" y1="0" x2="1" y2="1"><stop offset="0" stop-color="#f0f0ff"/><stop offset="1" stop-color="#7070a0"/></linearGradient></defs>
<rect x="5.5" y="4.3" width="13" height="13.2" fill="url(#fl)" stroke="#181838" stroke-width="1.2"/>
<rect x="7.5" y="5.2" width="9" height="3.6" fill="#f4f4ff"/>
<circle cx="9.2" cy="6.2" r="0.9" fill="#303060"/>
<rect x="7" y="9.2" width="10" height="1" fill="#505080"/>
<rect x="8" y="11" width="8.5" height="5.5" fill="#d0d0f4"/>
</svg>
<svg style="position:absolute;left:166px;top:52px;overflow:visible" width="24" height="22" viewBox="0 0 24 22"><defs></defs>
<path d="M10 5.2 L4.9 10.3 L8 10.7 C 9 14.5 11.5 16.6 15 16.6 L16.8 16.6 L20.8 11.2 L17.8 13.8 C 15 14 13.2 12.5 12.6 10.7 L15 10.3 Z" fill="#22d422" stroke="#064006" stroke-width="1.1" stroke-linejoin="round"/>
</svg>
<svg style="position:absolute;left:218px;top:52px;overflow:visible" width="24" height="22" viewBox="0 0 24 22"><defs><linearGradient id="bl" x1="0" y1="0" x2="0" y2="1"><stop offset="0" stop-color="#a0e0ff"/><stop offset="0.35" stop-color="#3090f8"/><stop offset="1" stop-color="#2070e8"/></linearGradient></defs>
<polygon points="12.3,3.3 19.8,9.6 19.8,11.4 16.2,11.9 19.8,16.6 18.6,18.3 5.4,18.3 4.3,16.6 7.6,12.1 4.3,11.4 4.3,9.6" fill="url(#bl)" stroke="#082a78" stroke-width="1.2" stroke-linejoin="round"/>
</svg>
<svg style="position:absolute;left:270px;top:52px;overflow:visible" width="24" height="22" viewBox="0 0 24 22"><defs></defs>
<polygon points="5.4,10.9 14.3,3.4 16.4,4.3 16.4,17.6 14.2,18.4" fill="url(#bl)" stroke="#082a78" stroke-width="1.2" stroke-linejoin="round"/>
</svg>
<svg style="position:absolute;left:320px;top:52px;overflow:visible" width="24" height="22" viewBox="0 0 24 22"><defs></defs>
<polygon points="16.4,10.9 7.5,3.4 5.4,4.3 5.4,17.6 7.6,18.4" fill="url(#bl)" stroke="#082a78" stroke-width="1.2" stroke-linejoin="round"/>
</svg>
<svg style="position:absolute;left:372px;top:52px;overflow:visible" width="24" height="22" viewBox="0 0 24 22"><defs></defs>
<polygon points="4.5,3.4 19.6,3.4 19.8,5.2 16.2,9.2 19.8,10.3 19.8,12.3 12.3,18.4 4.3,12.3 4.3,10.3 7.8,9.2 4.3,5.2" fill="url(#bl)" stroke="#082a78" stroke-width="1.2" stroke-linejoin="round"/>
</svg>
<svg style="position:absolute;left:422px;top:52px;overflow:visible" width="24" height="22" viewBox="0 0 24 22"><defs></defs>
<rect x="5.8" y="4" width="10.8" height="14.2" fill="#ffffff"/>
<rect x="5.2" y="17.6" width="11.8" height="1.2" fill="#70707c"/>
<rect x="16.2" y="6" width="0.9" height="12" fill="#a0a0b8"/>
<line x1="15.3" y1="3.8" x2="9.4" y2="15.6" stroke="#e89010" stroke-width="3.4" stroke-linecap="round"/>
<line x1="14.6" y1="4.6" x2="9.6" y2="14.6" stroke="#f8c040" stroke-width="1.2"/>
<circle cx="9.2" cy="16.2" r="1" fill="#5a4020"/>
</svg>
<svg style="position:absolute;left:474px;top:52px;overflow:visible" width="24" height="22" viewBox="0 0 24 22"><defs><linearGradient id="cy" x1="0" y1="0" x2="1" y2="0"><stop offset="0" stop-color="#e8f8ff"/><stop offset="0.45" stop-color="#c8e8ff"/><stop offset="0.6" stop-color="#2070e0"/><stop offset="1" stop-color="#0848c8"/></linearGradient></defs>
<path d="M6.3 6.2 Q6.3 3.6 12 3.6 Q17.7 3.6 17.7 6.2 L17.7 16.5 Q17.7 18.8 12 18.8 Q6.3 18.8 6.3 16.5 Z" fill="url(#cy)" stroke="#0c1c68" stroke-width="1.2"/>
<ellipse cx="12" cy="6.5" rx="5.2" ry="2.5" fill="#3c98f4"/>
</svg>
<svg style="position:absolute;left:525px;top:52px;overflow:visible" width="24" height="22" viewBox="0 0 24 22"><defs><linearGradient id="ic" x1="0" y1="0" x2="0" y2="1"><stop offset="0" stop-color="#b8e0ff"/><stop offset="0.5" stop-color="#3088f0"/><stop offset="1" stop-color="#1460d8"/></linearGradient></defs>
<circle cx="12" cy="10.9" r="7.8" fill="url(#ic)" stroke="#06206a" stroke-width="1.2"/>
<circle cx="12.2" cy="7.2" r="1.3" fill="#f0f8ff"/>
<path d="M10.6 9.4 L13.3 9.4 L13.3 14.8 L14.2 15.4 L10.2 15.4 L11.1 14.8 L11.1 10.4 L10.6 10.2 Z" fill="#ffffff"/>
</svg>
<svg style="position:absolute;left:576px;top:52px;overflow:visible" width="24" height="22" viewBox="0 0 24 22"><defs></defs>
<rect x="3.5" y="2.5" width="18.5" height="17" fill="#f4f4ea" stroke="#8a8aa0" stroke-width="1"/>
<rect x="3.2" y="2.2" width="19" height="2.2" fill="#4a78d8"/>
<rect x="5.5" y="6" width="6.5" height="1.4" fill="#4a5060"/>
<rect x="13.5" y="6" width="6.5" height="1.4" fill="#4a5060"/>
<rect x="12.4" y="5" width="0.8" height="14" fill="#d8d8c8"/>
</svg>
<svg style="position:absolute;left:628px;top:52px;overflow:visible" width="24" height="22" viewBox="0 0 24 22"><defs></defs>
<g fill="#20d020" stroke="#064006" stroke-width="1" stroke-linejoin="round">
<path d="M17.6 7.2 C 16 4.2 12 3 9.4 4.6 L 8.4 6.6 L 4.2 8.4 L 8.4 12.6 L 11.2 8.6 L 9.8 8.2 C 11.2 6.6 14.2 6.2 16.2 7.8 Z"/>
<path d="M6.4 15.4 C 8 18.4 12 19.6 14.6 18 L 15.6 16 L 19.8 14.2 L 15.6 10 L 12.8 14 L 14.2 14.4 C 12.8 16 9.8 16.4 7.8 14.8 Z"/>
</g></svg>
<svg style="position:absolute;left:679px;top:52px;overflow:visible" width="24" height="22" viewBox="0 0 24 22"><defs></defs>
<line x1="14.8" y1="13.2" x2="19.2" y2="18" stroke="#5a3000" stroke-width="3.2" stroke-linecap="round"/>
<line x1="14.8" y1="13.2" x2="19.2" y2="18" stroke="#e8b050" stroke-width="1.6" stroke-linecap="round"/>
<circle cx="9.4" cy="8.2" r="5.3" fill="#bde6f8" stroke="#4a6080" stroke-width="1.1"/>
</svg>
<svg style="position:absolute;left:730px;top:50px;overflow:visible" width="24" height="24" viewBox="0 0 24 24"><defs></defs>
<rect x="2.2" y="4.5" width="19" height="1.6" fill="#78789a"/>
<rect x="2.2" y="18.8" width="19" height="1.6" fill="#78789a"/>
<rect x="3.8" y="2.8" width="1.2" height="19" fill="#6c6c90"/>
<rect x="18" y="2.8" width="1.2" height="19" fill="#6c6c90"/>
<rect x="5" y="6.2" width="13" height="3" fill="#ececf8"/>
<rect x="5" y="15.8" width="13" height="3" fill="#f4f4fc"/>
<rect x="4.6" y="9.6" width="14" height="5.8" fill="#a4a4a8" stroke="#2a2a2a" stroke-width="1.1"/>
</svg>
<svg style="position:absolute;left:781px;top:50px;overflow:visible" width="24" height="24" viewBox="0 0 24 24"><defs></defs>
<circle cx="8.2" cy="9.2" r="3.8" fill="#f4f2ff"/>
<path d="M4 7.5 C 3.5 11 6 13.5 9.5 13.4" fill="none" stroke="#6a60a8" stroke-width="1.2"/>
<circle cx="8.5" cy="7.5" r="0.8" fill="#7a7090"/>
<polygon points="12.5,10.5 16.5,15.5 9.5,15.5" fill="#e4a420"/>
<rect x="5.8" y="15.6" width="14.6" height="5.6" rx="1" fill="#fcfcfc" stroke="#2a2a2a" stroke-width="1.1"/>
<path d="M8 18 h1 M10 18 h1 M12 18 h1 M14 18 h1 M16 18 h1" stroke="#505050" stroke-width="1.2"/>
</svg>
<svg style="position:absolute;left:831px;top:50px;overflow:visible" width="28" height="24" viewBox="0 0 28 24"><defs></defs>
<rect x="2.6" y="4.4" width="17.8" height="16.8" fill="#f0f0f0" stroke="#101010" stroke-width="1.2"/>
<rect x="2.6" y="17.5" width="17.8" height="1.5" fill="#9a9a9a"/>
<rect x="6.5" y="5" width="1" height="16" fill="#908880"/>
<path d="M10.5 4.4 V21.2 M15.6 4.4 V21.2 M2.6 7.6 H20.4 M2.6 13.5 H11" stroke="#101010" stroke-width="1.1"/>
<polygon points="10.5,11.4 17,11.4 17,7.6 23.8,13 17,18.4 17,15.6 10.5,15.6" fill="#1050f0"/>
</svg>
<svg style="position:absolute;left:882px;top:50px;overflow:visible" width="28" height="24" viewBox="0 0 28 24"><defs></defs>
<rect x="6.4" y="4.4" width="18" height="17" fill="#f0f0f0" stroke="#101010" stroke-width="1.2"/>
<rect x="20" y="8" width="4" height="13" fill="#ffffff"/>
<rect x="6.4" y="17.5" width="18" height="1.5" fill="#9a9a9a"/>
<rect x="18.8" y="8" width="1.2" height="13" fill="#909090"/>
<path d="M10.5 4.4 V21.2 M14.5 4.4 V21.2 M6.4 7.6 H24.4 M14 13.5 H18.5" stroke="#101010" stroke-width="1.1"/>
<polygon points="3.2,11.4 9.5,11.4 9.5,7.8 15,13.3 9.5,18.2 9.5,15.4 3.2,15.4" fill="#1050f0"/>
</svg>
<svg style="position:absolute;left:934px;top:52px;overflow:visible" width="24" height="22" viewBox="0 0 24 22"><defs><linearGradient id="wt" x1="0" y1="0" x2="1" y2="0"><stop offset="0" stop-color="#60a0f0"/><stop offset="1" stop-color="#0020a0"/></linearGradient></defs>
<rect x="5.5" y="3.5" width="15" height="14" fill="#fbf8ff" stroke="#203890" stroke-width="1"/>
<rect x="5.5" y="3.5" width="15" height="2.6" fill="url(#wt)"/>
<g fill="#c03818"><circle cx="7.8" cy="8.5" r="1.4"/><circle cx="17.9" cy="8.5" r="1.4"/><circle cx="7.8" cy="15" r="1.4"/><circle cx="17.9" cy="15" r="1.4"/></g>
</svg>
<svg style="position:absolute;left:986px;top:52px;overflow:visible" width="24" height="22" viewBox="0 0 24 22"><defs><linearGradient id="st" x1="0" y1="0" x2="0" y2="1"><stop offset="0" stop-color="#ff7070"/><stop offset="0.5" stop-color="#e01010"/><stop offset="1" stop-color="#ff3030"/></linearGradient></defs>
<polygon points="8.6,3.3 15.6,3.3 19.8,7.5 19.8,14.3 15.6,18.5 8.6,18.5 4.3,14.3 4.3,7.5" fill="url(#st)" stroke="#6a0000" stroke-width="1.1"/>
<path d="M9.2 7.8 L15 14 M15 7.8 L9.2 14" stroke="#ffffff" stroke-width="2.6"/>
</svg>
</body></html>
